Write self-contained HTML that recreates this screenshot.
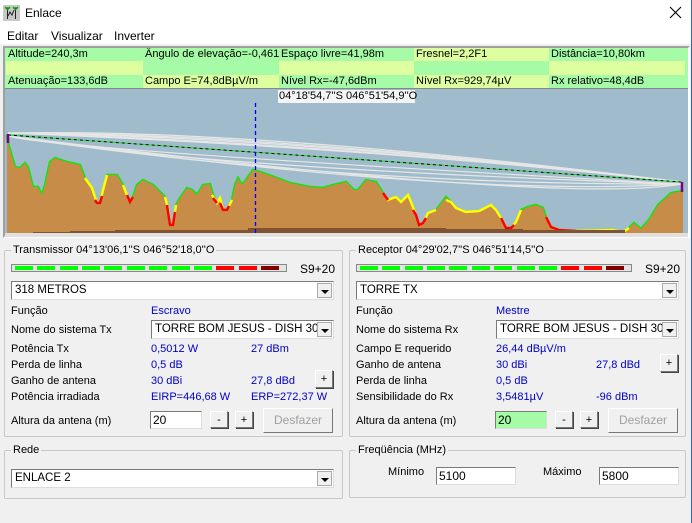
<!DOCTYPE html>
<html><head><meta charset="utf-8"><style>
*{box-sizing:border-box;margin:0;padding:0}
body{width:692px;height:523px;background:#f0f0f0;font-family:"Liberation Sans",sans-serif;font-size:11px;color:#000;position:relative;overflow:hidden}
.a{position:absolute;white-space:nowrap}
.b{color:#0000c8}
.g{background:#a6fca6}.y{background:#ddffa0}
.cell{position:absolute;height:13px;line-height:13px;padding-left:2px;overflow:hidden;white-space:nowrap}
.grp{position:absolute;border:1px solid #c8c8c8;border-radius:2px}
.grp>span{position:absolute;top:-8px;left:6px;background:#f0f0f0;padding:0 2px;line-height:14px}
.combo{position:absolute;background:#fff;border:1px solid #7a7a7a;border-right-color:#ddd;border-bottom-color:#ddd;height:19px;line-height:17px;padding-left:3px;font-size:11.5px;overflow:hidden}
.combo i{position:absolute;right:1px;top:1px;width:15px;height:15px;background:#f0f0f0;border:1px solid #aaa}
.combo i:after{content:"";position:absolute;left:3px;top:6px;border-left:4px solid transparent;border-right:4px solid transparent;border-top:4px solid #000}
.btn{position:absolute;background:#f0f0f0;border:1px solid #fff;border-right-color:#777;border-bottom-color:#777;box-shadow:1px 1px 0 #444;text-align:center;line-height:16px}
.inp{position:absolute;background:#fff;border:1px solid #7a7a7a;border-right-color:#ddd;border-bottom-color:#ddd;height:18px;line-height:16px;padding-left:2px;font-size:12px}
.meter{position:absolute;height:8px;border:1px solid #888;background:#e4e4e4}
.meter b{position:absolute;top:1px;height:4px;width:18px}
</style></head><body>
<div class="a" style="left:0;top:0;width:692px;height:44px;background:#fff"></div>
<div class="a" style="left:691px;top:0;width:1px;height:523px;background:#1c6fc4"></div>
<svg class="a" style="left:3px;top:5px" width="17" height="16"><rect width="17" height="16" fill="#c8c8c8"/><path d="M2 3h5M4.5 3v11M10 3h5M12.5 3v11M5 11l2-4 2 3 2-5" stroke="#222" fill="none"/><path d="M2 2l2.5 2.5 2.5-2.5M10 2l2.5 2.5 2.5-2.5" stroke="#0a0" fill="none" stroke-width="1.5"/></svg>
<div class="a" style="left:25px;top:6px;font-size:12px">Enlace</div>
<svg class="a" style="left:669px;top:6px" width="13" height="13"><path d="M1 1L12 12M12 1L1 12" stroke="#000" stroke-width="1.1"/></svg>
<div class="a" style="left:7px;top:29px;font-size:12px">Editar</div>
<div class="a" style="left:51px;top:29px;font-size:12px">Visualizar</div>
<div class="a" style="left:114px;top:29px;font-size:12px">Inverter</div>
<div class="a" style="left:3px;top:46px;width:687px;height:192px;border:2px solid #a0a0a0;border-right-color:#fff;border-bottom-color:#fff;background:#a0bccc"></div>
<div class="a" style="left:5px;top:48px;width:683px;height:40px;background:#a6fca6"></div>
<div class="cell g" style="left:6px;top:48px;width:137px">Altitude=240,3m</div>
<div class="cell g" style="left:143px;top:48px;width:136px">Ângulo de elevação=-0,461°</div>
<div class="cell g" style="left:279px;top:48px;width:135px">Espaço livre=41,98m</div>
<div class="cell y" style="left:414px;top:48px;width:135px">Fresnel=2,2F1</div>
<div class="cell g" style="left:549px;top:48px;width:136px">Distância=10,80km</div>
<div class="cell y" style="left:6px;top:61px;width:137px;height:14px"></div>
<div class="cell g" style="left:143px;top:61px;width:136px;height:14px"></div>
<div class="cell y" style="left:279px;top:61px;width:135px;height:14px"></div>
<div class="cell g" style="left:414px;top:61px;width:135px;height:14px"></div>
<div class="cell y" style="left:549px;top:61px;width:136px;height:14px"></div>
<div class="cell g" style="left:6px;top:75px;width:137px">Atenuação=133,6dB</div>
<div class="cell y" style="left:143px;top:75px;width:136px">Campo E=74,8dBµV/m</div>
<div class="cell g" style="left:279px;top:75px;width:135px">Nível Rx=-47,6dBm</div>
<div class="cell y" style="left:414px;top:75px;width:135px">Nível Rx=929,74µV</div>
<div class="cell g" style="left:549px;top:75px;width:136px">Rx relativo=48,4dB</div>
<div class="a" style="left:5px;top:88px;width:683px;height:1px;background:#888"></div>
<svg class="a" style="left:0;top:0" width="692" height="240">
<path d="M7 135L8 143L15 167L20 168L25 163L28 167L33 187L38 187L42 195L45 185L50 162L55 158L67 162L80 165L85 178L92 188L97 203L100 203L103 190L107 175L117 175L123 185L127 195L130 202L133 197L137 185L143 180L153 185L160 192L165 197L168 208L170 225L173 225L176 205L180 198L187 188L192 190L197 195L203 185L210 184L213 195L217 203L220 198L223 210L227 210L232 200L235 185L238 178L242 185L248 177L253 170L263 173L277 178L290 183L310 187L323 188L333 185L346 182L354 190L358 190L366 180L376 182L383 193L388 200L393 198L396 197L401 202L408 195L411 202L416 215L419 225L423 223L428 213L436 210L446 197L451 202L456 208L466 212L479 211L491 205L496 210L501 218L506 228L511 228L516 222L521 210L528 207L536 205L543 208L546 217L551 227L559 230L576 231L613 230L623 232L629 228L634 223L641 229L649 220L658 205L671 193L683 191" fill="none" stroke="#0e0" stroke-width="2.5"/>
<path d="M7 135L8 143L15 167L20 168L25 163L28 167L33 187L38 187L42 195L45 185L50 162L55 158L67 162L80 165L85 178L92 188L97 203L100 203L103 190L107 175L117 175L123 185L127 195L130 202L133 197L137 185L143 180L153 185L160 192L165 197L168 208L170 225L173 225L176 205L180 198L187 188L192 190L197 195L203 185L210 184L213 195L217 203L220 198L223 210L227 210L232 200L235 185L238 178L242 185L248 177L253 170L263 173L277 178L290 183L310 187L323 188L333 185L346 182L354 190L358 190L366 180L376 182L383 193L388 200L393 198L396 197L401 202L408 195L411 202L416 215L419 225L423 223L428 213L436 210L446 197L451 202L456 208L466 212L479 211L491 205L496 210L501 218L506 228L511 228L516 222L521 210L528 207L536 205L543 208L546 217L551 227L559 230L576 231L613 230L623 232L629 228L634 223L641 229L649 220L658 205L671 193L683 191L683 233L7 233Z" fill="#c68c48"/>
<g fill="none" stroke-width="2.5">
<path d="M85 178L92 188L97 203L100 203L103 190L107 175" stroke="#ff0"/>
<path d="M123 185L127 195L130 202L133 197" stroke="#ff0"/>
<path d="M165 197L168 208L170 225L173 225L176 205" stroke="#ff0"/>
<path d="M95 200L97 203L100 203L102 196" stroke="#f00"/>
<path d="M127 195L130 202L133 197" stroke="#f00"/>
<path d="M167 205L170 225L173 225L175 212" stroke="#f00"/>
<path d="M212 195L217 203L220 198L223 210L227 210L232 200" stroke="#ff0"/>
<path d="M213 198L217 203M220 203L223 210L227 210L229 206" stroke="#f00"/>
<path d="M383 193L388 200L393 198L396 197L401 202L408 195L411 202L416 215L419 225L423 223L428 213L436 210" stroke="#ff0"/>
<path d="M383 193L388 200M413 210L416 215L419 225L423 223L426 218" stroke="#f00"/>
<path d="M446 200L451 202L456 208L466 212L479 211L491 205L496 210L501 218L506 228L511 228L516 222L521 210" stroke="#ff0"/>
<path d="M501 218L506 228L511 228L514 225" stroke="#f00"/>
<path d="M546 217L551 227L559 230L576 231L613 230L623 232L629 228" stroke="#ff0"/>
<path d="M546 217L551 227L559 230L576 231" stroke="#f00"/>
</g>
<path d="M33 233V232H70V231H115V230H248V228H446V229H523V230H625V233Z" fill="#825332"/>
<g fill="none" stroke="#e6e6e6" stroke-width="1.2">
<path d="M8 133Q250 128 682 182"/><path d="M8 133Q260 132 682 182"/><path d="M8 133Q280 136 682 182"/><path d="M8 133Q320 142 682 182"/><path d="M8 133Q380 148 682 182"/>
<path d="M8 136Q60 150 682 184"/><path d="M8 136Q200 168 682 184"/><path d="M8 136Q330 185 682 184"/><path d="M8 136Q450 198 682 184"/><path d="M8 136Q560 205 682 184"/>
</g>
<path d="M8 135L682 182" stroke="#000" stroke-width="1" stroke-dasharray="3 3"/>
<path d="M8 135L682 182" stroke="#0e0" stroke-width="1" stroke-dasharray="3 3" stroke-dashoffset="3"/>
<path d="M8 134V143M682 182V192" stroke="#800080" stroke-width="2.5"/>
<rect x="255" y="103" width="1" height="133" fill="#a0bccc" opacity="0"/>
<line x1="255.5" y1="103" x2="255.5" y2="236" stroke="#0000ff" stroke-width="1.3" stroke-dasharray="4 3"/>
</svg>
<div class="a" style="left:5px;top:233px;width:683px;height:4px;background:#e0e0e0"></div>
<div class="a" style="left:278px;top:90px;width:137px;height:13px;background:#f4f4f4;line-height:13px;padding-left:1px">04°18'54,7''S 046°51'54,9''O</div>

<div class="grp" style="left:4px;top:250px;width:339px;height:187px"><span>Transmissor 04°13'06,1''S 046°52'18,0''O</span></div>
<div class="meter" style="left:11px;top:264px;width:276px"><b style="left:3px;background:#0f0"></b><b style="left:25px;background:#0f0"></b><b style="left:48px;background:#0f0"></b><b style="left:70px;background:#0f0"></b><b style="left:92px;background:#0f0"></b><b style="left:115px;background:#0f0"></b><b style="left:137px;background:#0f0"></b><b style="left:160px;background:#0f0"></b><b style="left:182px;background:#0f0"></b><b style="left:204px;background:#f00"></b><b style="left:227px;background:#f00"></b><b style="left:249px;background:#800000"></b></div>
<div class="a" style="left:300px;top:262px;font-size:12px">S9+20</div>
<div class="combo" style="left:11px;top:281px;width:323px">318 METROS<i></i></div>
<div class="a" style="left:11px;top:305px">Função</div><div class="a b" style="left:151px;top:305px">Escravo</div>
<div class="a" style="left:11px;top:324px">Nome do sistema Tx</div>
<div class="combo" style="left:151px;top:320px;width:183px">TORRE BOM JESUS - DISH 30D<i></i></div>
<div class="a" style="left:11px;top:343px">Potência Tx</div><div class="a b" style="left:151px;top:343px">0,5012 W</div><div class="a b" style="left:251px;top:343px">27 dBm</div>
<div class="a" style="left:11px;top:359px">Perda de linha</div><div class="a b" style="left:151px;top:359px">0,5 dB</div>
<div class="a" style="left:11px;top:375px">Ganho de antena</div><div class="a b" style="left:151px;top:375px">30 dBi</div><div class="a b" style="left:251px;top:375px">27,8 dBd</div>
<div class="btn" style="left:315px;top:370px;width:18px;height:18px">+</div>
<div class="a" style="left:11px;top:391px">Potência irradiada</div><div class="a b" style="left:151px;top:391px">EIRP=446,68 W</div><div class="a b" style="left:251px;top:391px">ERP=272,37 W</div>
<div class="a" style="left:11px;top:415px">Altura da antena (m)</div>
<div class="inp" style="left:150px;top:411px;width:52px">20</div>
<div class="btn" style="left:210px;top:411px;width:18px;height:17px">-</div>
<div class="btn" style="left:235px;top:411px;width:18px;height:17px">+</div>
<div class="btn" style="left:263px;top:408px;width:70px;height:25px;line-height:23px;color:#a0a0a0;box-shadow:none;font-size:12px">Desfazer</div>

<div class="grp" style="left:349px;top:250px;width:337px;height:187px"><span>Receptor 04°29'02,7''S 046°51'14,5''O</span></div>
<div class="meter" style="left:356px;top:264px;width:276px"><b style="left:3px;background:#0f0"></b><b style="left:25px;background:#0f0"></b><b style="left:48px;background:#0f0"></b><b style="left:70px;background:#0f0"></b><b style="left:92px;background:#0f0"></b><b style="left:115px;background:#0f0"></b><b style="left:137px;background:#0f0"></b><b style="left:160px;background:#0f0"></b><b style="left:182px;background:#0f0"></b><b style="left:204px;background:#f00"></b><b style="left:227px;background:#f00"></b><b style="left:249px;background:#800000"></b></div>
<div class="a" style="left:645px;top:262px;font-size:12px">S9+20</div>
<div class="combo" style="left:356px;top:281px;width:323px">TORRE TX<i></i></div>
<div class="a" style="left:356px;top:305px">Função</div><div class="a b" style="left:496px;top:305px">Mestre</div>
<div class="a" style="left:356px;top:324px">Nome do sistema Rx</div>
<div class="combo" style="left:496px;top:320px;width:183px">TORRE BOM JESUS - DISH 30D<i></i></div>
<div class="a" style="left:356px;top:343px">Campo E requerido</div><div class="a b" style="left:496px;top:343px">26,44 dBµV/m</div>
<div class="a" style="left:356px;top:359px">Ganho de antena</div><div class="a b" style="left:496px;top:359px">30 dBi</div><div class="a b" style="left:596px;top:359px">27,8 dBd</div>
<div class="btn" style="left:660px;top:354px;width:18px;height:18px">+</div>
<div class="a" style="left:356px;top:375px">Perda de linha</div><div class="a b" style="left:496px;top:375px">0,5 dB</div>
<div class="a" style="left:356px;top:391px">Sensibilidade do Rx</div><div class="a b" style="left:496px;top:391px">3,5481µV</div><div class="a b" style="left:596px;top:391px">-96 dBm</div>
<div class="a" style="left:356px;top:415px">Altura da antena (m)</div>
<div class="inp" style="left:495px;top:411px;width:52px;background:#a6fca6">20</div>
<div class="btn" style="left:555px;top:411px;width:18px;height:17px">-</div>
<div class="btn" style="left:580px;top:411px;width:18px;height:17px">+</div>
<div class="btn" style="left:608px;top:408px;width:70px;height:25px;line-height:23px;color:#a0a0a0;box-shadow:none;font-size:12px">Desfazer</div>

<div class="grp" style="left:4px;top:450px;width:339px;height:49px"><span>Rede</span></div>
<div class="combo" style="left:11px;top:469px;width:323px">ENLACE 2<i></i></div>

<div class="grp" style="left:349px;top:450px;width:337px;height:48px"><span>Freqüência (MHz)</span></div>
<div class="a" style="left:388px;top:466px">Mínimo</div>
<div class="inp" style="left:436px;top:467px;width:80px">5100</div>
<div class="a" style="left:543px;top:466px">Máximo</div>
<div class="inp" style="left:599px;top:467px;width:80px">5800</div>
</body></html>
